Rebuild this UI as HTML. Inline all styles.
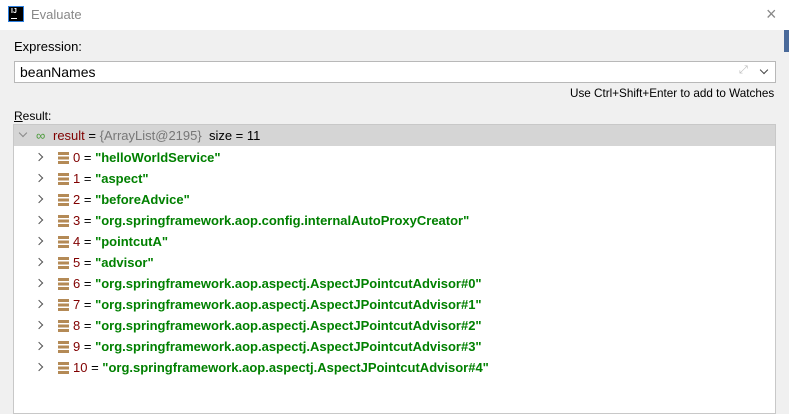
<!DOCTYPE html>
<html><head><style>
*{margin:0;padding:0;box-sizing:border-box}
body{width:789px;height:405px;background:#f0f0f0;font-family:"Liberation Sans",sans-serif;position:relative;overflow:hidden;font-size:12px;color:#000}
.abs{position:absolute;white-space:nowrap}
#title{position:absolute;left:0;top:0;width:789px;height:30px;background:#fff}
.row{position:absolute;left:14px;width:761px;height:21px;line-height:21px;font-size:13px}
.chev{position:absolute;top:7px;width:6px;height:6px;border-right:1.5px solid #555;border-bottom:1.5px solid #555;transform:rotate(-45deg)}
.ic{position:absolute;top:5px;left:44px;width:11px;height:12px;background:repeating-linear-gradient(#b48a56 0 3px,#fff 3px 4.5px)}
.t{position:absolute;left:59px}
.n{color:#800000}
.s{color:#008000;font-weight:bold}
</style></head><body>
<div id="title">
 <div class="abs" style="left:8px;top:6px;width:16px;height:16px;background:#000;border:1px solid #2d7fe0;color:#fff;font-size:7px;font-weight:bold;line-height:9px;padding-left:2px">IJ<div style="width:6px;height:1px;background:#fff;margin-top:2px"></div></div>
 <div class="abs" style="left:31px;top:7px;font-size:13px;color:#888">Evaluate</div>
 <div class="abs" style="left:766px;top:4px;font-size:18px;color:#888;font-weight:100">×</div>
</div>
<div class="abs" style="left:784px;top:30px;width:5px;height:22px;background:#4a6a9a"></div>
<div class="abs" style="left:14px;top:39px;font-size:13px">Expression:</div>
<div class="abs" style="left:14px;top:61px;width:762px;height:22px;background:#fff;border:1px solid #b8b8b8"></div>
<div class="abs" style="left:20px;top:64px;font-size:14px">beanNames</div>
<div class="abs" style="left:739px;top:64px;font-size:11px;color:#bbb">⤢</div>
<div class="abs" style="left:761px;top:67px;width:6px;height:6px;border-right:1.3px solid #444;border-bottom:1.3px solid #444;transform:rotate(45deg)"></div>
<div class="abs" style="left:570px;top:87px;font-size:11.7px">Use Ctrl+Shift+Enter to add to Watches</div>
<div class="abs" style="left:14px;top:109px;font-size:12px"><u>R</u>esult:</div>
<div class="abs" style="left:13px;top:124px;width:763px;height:290px;background:#fff;border:1px solid #c8c8c8"></div>
<div class="row" style="top:125px;background:#d5d5d5">
 <div class="chev" style="left:6px;top:5px;transform:rotate(45deg);border-color:#888"></div>
 <div class="abs" style="left:22px;top:0;color:#4a9a3a;font-size:13px">&#8734;</div>
 <div class="abs" style="left:39px;top:0"><span class="n">result</span> = <span style="color:#777">{ArrayList@2195}</span>&nbsp; size = 11</div>
</div>
<div class="row" style="top:147px"><div class="chev" style="left:22px"></div><div class="ic"></div><div class="t"><span class="n">0</span> = <span class="s">"helloWorldService"</span></div></div>
<div class="row" style="top:168px"><div class="chev" style="left:22px"></div><div class="ic"></div><div class="t"><span class="n">1</span> = <span class="s">"aspect"</span></div></div>
<div class="row" style="top:189px"><div class="chev" style="left:22px"></div><div class="ic"></div><div class="t"><span class="n">2</span> = <span class="s">"beforeAdvice"</span></div></div>
<div class="row" style="top:210px"><div class="chev" style="left:22px"></div><div class="ic"></div><div class="t"><span class="n">3</span> = <span class="s">"org.springframework.aop.config.internalAutoProxyCreator"</span></div></div>
<div class="row" style="top:231px"><div class="chev" style="left:22px"></div><div class="ic"></div><div class="t"><span class="n">4</span> = <span class="s">"pointcutA"</span></div></div>
<div class="row" style="top:252px"><div class="chev" style="left:22px"></div><div class="ic"></div><div class="t"><span class="n">5</span> = <span class="s">"advisor"</span></div></div>
<div class="row" style="top:273px"><div class="chev" style="left:22px"></div><div class="ic"></div><div class="t"><span class="n">6</span> = <span class="s">"org.springframework.aop.aspectj.AspectJPointcutAdvisor#0"</span></div></div>
<div class="row" style="top:294px"><div class="chev" style="left:22px"></div><div class="ic"></div><div class="t"><span class="n">7</span> = <span class="s">"org.springframework.aop.aspectj.AspectJPointcutAdvisor#1"</span></div></div>
<div class="row" style="top:315px"><div class="chev" style="left:22px"></div><div class="ic"></div><div class="t"><span class="n">8</span> = <span class="s">"org.springframework.aop.aspectj.AspectJPointcutAdvisor#2"</span></div></div>
<div class="row" style="top:336px"><div class="chev" style="left:22px"></div><div class="ic"></div><div class="t"><span class="n">9</span> = <span class="s">"org.springframework.aop.aspectj.AspectJPointcutAdvisor#3"</span></div></div>
<div class="row" style="top:357px"><div class="chev" style="left:22px"></div><div class="ic"></div><div class="t"><span class="n">10</span> = <span class="s">"org.springframework.aop.aspectj.AspectJPointcutAdvisor#4"</span></div></div>
</body></html>
